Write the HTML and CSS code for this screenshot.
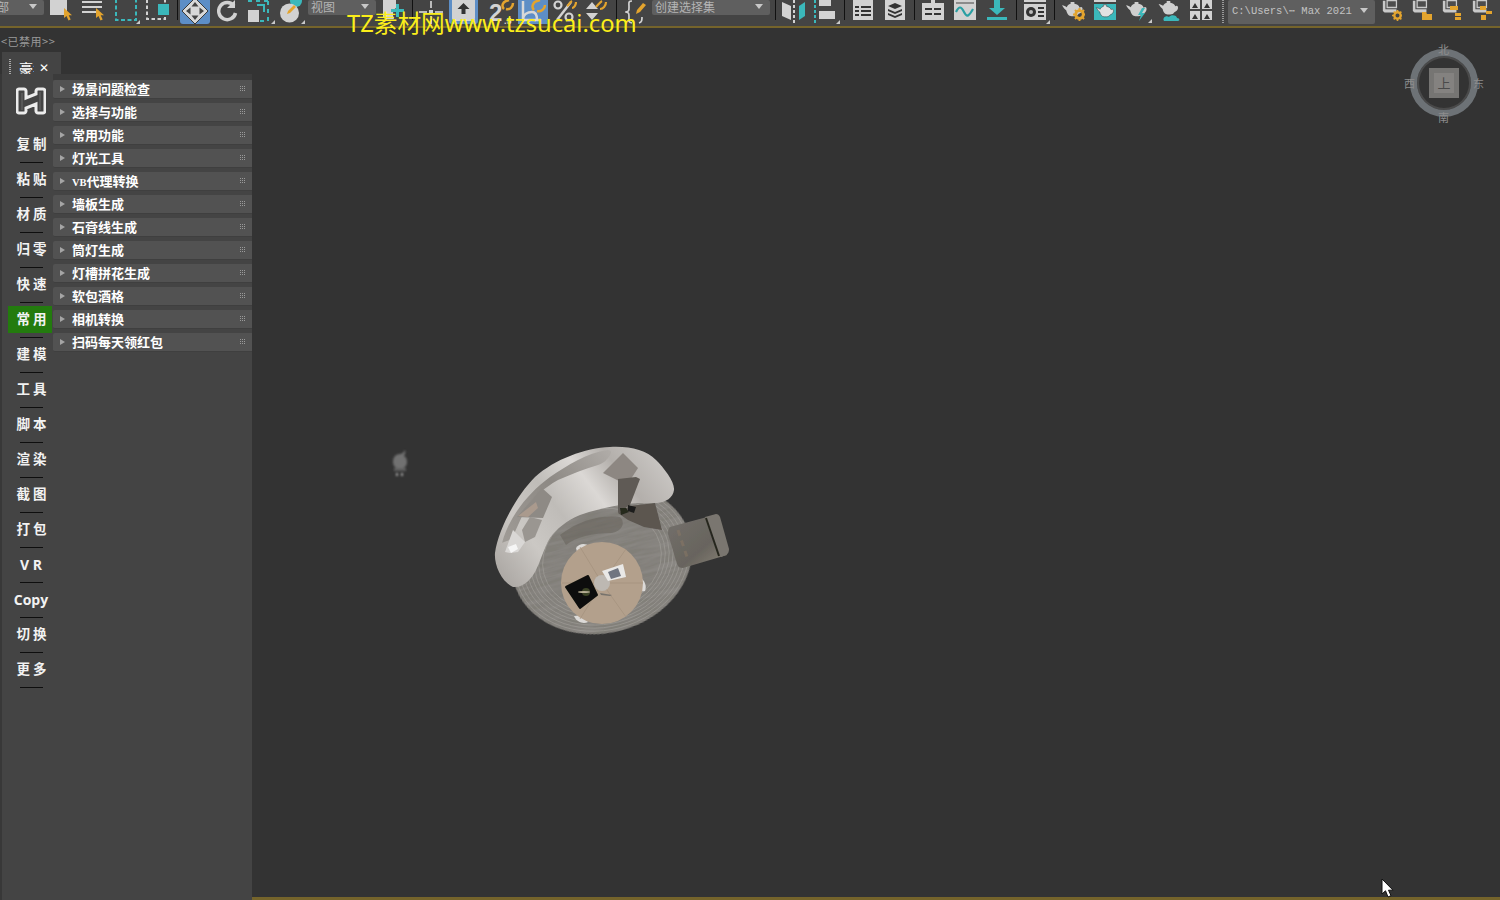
FILE: index.html
```html
<!DOCTYPE html>
<html lang="zh">
<head>
<meta charset="utf-8">
<title>3ds Max</title>
<link rel="stylesheet" href="styles.css">
</head>
<body>
<svg class="defs" width="0" height="0" aria-hidden="true">
  <defs>
    <symbol id="teapot" viewBox="0 0 22 20">
      <path d="M9 1h4v2c3 .5 5 2 5.500 4 2-1.500 3.500 0 3 2.500-.5 2-2 3.500-4 4-1 1.500-2.500 2.500-4.500 2.500h-3C7 16 5 13 4.500 10 3 9 1.500 7 0 4.500c2 .5 3.500 1 5 2 .5-1.500 2-3 4-3.500z"/>
    </symbol>
    <symbol id="gear" viewBox="0 0 12 12">
      <circle cx="6" cy="6" r="3.500" fill="none" stroke="#e3a42e" stroke-width="2.600"/>
      <path d="M6 0v2M6 10v2M0 6h2M10 6h2M1.800 1.800l1.400 1.400M8.800 8.800l1.400 1.400M1.800 10.200l1.400-1.400M8.800 3.200l1.400-1.400" stroke="#e3a42e" stroke-width="1.800"/>
    </symbol>
    <symbol id="doc" viewBox="0 0 20 16">
      <path d="M1 0h3v10h13v4H3l-2-2zM6 0h11v8H6z" fill="#c9c9c9"/>
      <path d="M6 0h11v8H6z" fill="#4c4c4c" stroke="#c9c9c9" stroke-width="1.500"/>
    </symbol>
    <symbol id="cursor" viewBox="0 0 9 13">
      <path d="M0 0v10l2.500-2 2 4.500 2.200-1-2-4.200H8z" fill="#e3a42e"/>
    </symbol>
  </defs>
</svg>

<div class="app">
  <header class="toolbar">
    <div class="dd dd-first"><span class="dd-text">部</span><i class="caret"></i></div>

    <svg class="ic m6" width="24" height="24"><rect x="0" y="-2" width="17" height="17" fill="#d2d2d2"/><use href="#cursor" x="14" y="8" width="9" height="13"/></svg>
    <svg class="ic m8" width="24" height="24"><path d="M0 1h20v2H0zM0 6h20v2H0zM0 11h14v2H0z" fill="#d2d2d2"/><use href="#cursor" x="14" y="8" width="9" height="13"/></svg>
    <svg class="ic m8" width="26" height="24"><rect x="2" y="-1" width="20" height="21" fill="none" stroke="#3bb8bb" stroke-width="2" stroke-dasharray="4 2.500"/><path d="M26 20v4h-4z" fill="#c9c9c9"/></svg>
    <svg class="ic m6" width="26" height="24"><rect x="1" y="-1" width="18" height="20" fill="none" stroke="#d2d2d2" stroke-width="2" stroke-dasharray="3.500 2.500"/><rect x="12" y="4" width="11" height="11" fill="#3bb8bb"/></svg>
    <i class="sep m5"></i>

    <div class="on on-move m2">
      <svg width="30" height="24"><path d="M15 -2l13 13-13 13L2 11z" fill="#d8d8d8" stroke="#3a3a3a"/><path d="M15 2l3.500 4.500h-7zM15 20l3.500-4.500h-7zM6 11l4.500-3.500v7zM24 11l-4.500-3.500v7z" fill="#444"/></svg>
    </div>
    <svg class="ic m7" width="22" height="24"><path d="M17 6a8.500 8.500 0 1 0 1.500 7" fill="none" stroke="#d2d2d2" stroke-width="3.500"/><path d="M18 0v8h-8z" fill="#d2d2d2"/></svg>
    <svg class="ic m8" width="28" height="24"><path d="M1 1h4M9 1h4M17 1h4M21 1v4M21 9v4M21 17v4M13 21h4" fill="none" stroke="#3bb8bb" stroke-width="2"/><rect x="1" y="10" width="11" height="12" fill="#d2d2d2"/><path d="M10 5h7v7" fill="none" stroke="#3bb8bb" stroke-width="2"/><path d="M28 20v4h-4z" fill="#c9c9c9"/></svg>
    <svg class="ic m4" width="26" height="24"><circle cx="17" cy="1" r="6" fill="#3bb8bb"/><circle cx="10.500" cy="13" r="9.500" fill="#d2d2d2"/><path d="M9 11l6-6 2 2-6 6-3 1z" fill="#e3a42e"/><path d="M26 20v4h-4z" fill="#c9c9c9"/></svg>

    <div class="dd dd-view m3"><span class="dd-text">视图</span><i class="caret"></i></div>

    <svg class="ic m6" width="24" height="24"><path d="M1 0h13v8c-2 1-3 3-3 6 0 2 .5 4 1 5H3l-2-2z" fill="#d2d2d2"/><path d="M16 8h3v5h5v3h-5v5h-3v-5h-5v-3h5z" fill="#3bb8bb" transform="translate(-2 -4)"/></svg>
    <i class="sep m6"></i>
    <svg class="ic m6" width="24" height="24"><path d="M11 1h2v10h11v2H13v11h-2V13H0v-2h11z" fill="#bbb"/><rect x="8" y="8" width="8" height="8" fill="#444"/><rect x="10" y="10" width="4" height="4" fill="#d2d2d2"/></svg>
    <div class="on on-lift m6">
      <svg width="23" height="24"><rect x="0" y="-3" width="23" height="24" rx="3" fill="#d2d2d2"/><path d="M11.500 3l6 6h-4v5h-4V9h-4z" fill="#333"/></svg>
    </div>
    <svg class="ic m9" width="28" height="24"><text x="2" y="21" class="ic-num">2</text><text x="17" y="24" class="ic-num-s">.5</text><path d="M17 9c-3-3-1-7 2-8l3-1M19 9c4 1 7-2 7-6" fill="none" stroke="#e3a42e" stroke-width="2.500"/></svg>
    <div class="on on-angle m3">
      <svg width="30" height="24"><path d="M5 1v19h18M5 20c0-6 5-8 9-8 3 0 5 3 5 8" fill="none" stroke="#d8d8d8" stroke-width="2.500"/><path d="M16 10c-3-3-1-8 3-9l3-1M19 11c4 1 8-2 8-6" fill="none" stroke="#e3a42e" stroke-width="2.500"/></svg>
    </div>
    <svg class="ic m5" width="24" height="24"><path d="M18 2L4 20" stroke="#d2d2d2" stroke-width="2.500"/><circle cx="5" cy="5" r="3.500" fill="none" stroke="#d2d2d2" stroke-width="2.200"/><circle cx="16" cy="17" r="3.500" fill="none" stroke="#d2d2d2" stroke-width="2.200"/><path d="M14 6c2-1 3-4 5-5M19 8c2 0 4-3 4-6" fill="none" stroke="#e3a42e" stroke-width="2.200"/></svg>
    <svg class="ic m8" width="24" height="24"><path d="M1 9l6-7 6 7zM1 13h12l-6 7z" fill="#d2d2d2"/><path d="M11 7c2-2 4-5 6-6M15 9c3 0 6-3 6-7" fill="none" stroke="#e3a42e" stroke-width="2.200"/></svg>
    <i class="sep m7"></i>
    <svg class="ic m8" width="22" height="24"><path d="M7 1C3 1 4 3 4 7s0 4-3 5c3 1 3 1 3 5s-1 5 3 6M14 23c3-1 3-3 3-6" fill="none" stroke="#d2d2d2" stroke-width="1.700"/><path d="M12 10l6-7 3 2-6 7-4 2z" fill="#e3a42e"/></svg>

    <div class="dd dd-sets m5"><span class="dd-text">创建选择集</span><i class="caret"></i></div>
    <i class="sep m5"></i>

    <svg class="ic m6" width="24" height="24"><path d="M0 2l9 4v14L0 16z" fill="#d2d2d2"/><path d="M23 2l-6 4v14l6-4z" fill="#3bb8bb"/><path d="M12 0v24" stroke="#d2d2d2" stroke-width="2" stroke-dasharray="3 2"/></svg>
    <svg class="ic m8" width="26" height="24"><path d="M1 0v24" stroke="#3bb8bb" stroke-width="2" stroke-dasharray="3 2"/><rect x="5" y="-2" width="12" height="8" fill="#d2d2d2"/><rect x="5" y="11" width="16" height="8" fill="#d2d2d2"/><path d="M26 20v4h-4z" fill="#c9c9c9"/></svg>
    <i class="sep m4"></i>

    <svg class="ic m8" width="20" height="24"><path d="M0 0h20v20H0z" fill="#d2d2d2"/><path d="M2 6h4v2H2zM8 6h10v2H8zM2 10h4v2H2zM8 10h10v2H8zM2 14h4v2H2zM8 14h10v2H8z" fill="#333"/></svg>
    <svg class="ic m12" width="20" height="24"><path d="M0 0h20v20H0z" fill="#d2d2d2"/><path d="M10 3l7 3-7 3-7-3zM3 9l7 3 7-3v2l-7 3-7-3zM3 13l7 3 7-3v2l-7 3-7-3z" fill="#333"/></svg>
    <i class="sep m9"></i>
    <svg class="ic m7" width="22" height="24"><path d="M0 3h9V0h4v3h9v17H0z" fill="#d2d2d2"/><path d="M3 8h7v2H3zM12 8h7v2h-7zM3 13h7v2H3zM12 13h7v2h-7z" fill="#333"/></svg>
    <svg class="ic m10" width="22" height="24"><path d="M0 0h22v20H0z" fill="#d2d2d2"/><path d="M2 12c3-6 5-6 8 0s5 4 9-3" fill="none" stroke="#2a9fa3" stroke-width="2.200"/><path d="M2 3h18" stroke="#444"/></svg>
    <svg class="ic m10" width="22" height="24"><path d="M8 0h6v8h5l-8 7-8-7h5z" fill="#3bb8bb"/><rect x="1" y="17" width="20" height="3" fill="#3bb8bb"/></svg>
    <i class="sep m8"></i>
    <svg class="ic m7" width="26" height="24"><path d="M0 0h22v20H0z" fill="#d2d2d2"/><path d="M0 3h22" stroke="#444" stroke-width="2"/><circle cx="7" cy="12" r="5" fill="#333"/><circle cx="7" cy="12" r="2" fill="#bbb"/><path d="M14 7h6v2h-6zM14 11h6v2h-6zM14 15h6v2h-6z" fill="#333"/><path d="M26 20v4h-4z" fill="#c9c9c9"/></svg>
    <i class="sep m4"></i>
    <svg class="ic m7" width="23" height="24"><use href="#teapot" x="0" y="1" width="21" height="19" fill="#cfcfcf"/><use href="#gear" x="11" y="8" width="13" height="13"/></svg>
    <svg class="ic m9" width="22" height="24"><rect x="0" y="-1" width="22" height="3" fill="#d2d2d2"/><rect x="0" y="4" width="22" height="16" fill="#3bb8bb"/><use href="#teapot" x="1" y="4" width="20" height="16" fill="#e2e2e2" stroke="#333" stroke-width=".6"/></svg>
    <svg class="ic m10" width="26" height="24"><use href="#teapot" x="0" y="1" width="21" height="19" fill="#cfcfcf"/><path d="M16 8l-4 7h3l-2 6 6-8h-3l3-5z" fill="#3bb8bb"/><path d="M26 19v4h-4z" fill="#c9c9c9"/></svg>
    <svg class="ic m6" width="24" height="24"><use href="#teapot" x="0" y="0" width="21" height="18" fill="#cfcfcf"/><path d="M6 21c-2-3 2-6 5-4 2-3 8-2 8 1 3 0 3 3 1 3z" fill="#3bb8bb"/></svg>
    <svg class="ic m8" width="22" height="24"><path d="M0 0h10v9H0zM12 0h10v9H12zM0 11h10v9H0zM12 11h10v9H12z" fill="#d2d2d2"/><path d="M2 8l3-5 3 5zM14 8l3-5 3 5zM2 19l3-5 3 5zM14 19l3-5 3 5z" fill="#333"/></svg>

    <i class="dots m10"></i>
    <div class="dd dd-path m4"><span class="dd-mono">C:\Users\⋯ Max 2021</span><i class="caret"></i></div>

    <svg class="ic m7" width="20" height="24"><use href="#doc" x="0" y="0" width="17" height="15"/><use href="#gear" x="10" y="10" width="11" height="11"/></svg>
    <svg class="ic m10" width="20" height="24"><use href="#doc" x="0" y="0" width="17" height="15"/><path d="M10 12h4l1 2h5v6H10z" fill="#e3a42e"/></svg>
    <svg class="ic m10" width="20" height="24"><use href="#doc" x="0" y="0" width="17" height="15"/><path d="M8 6h8v4H8zM13 13h6v3h-6zM13 17h6v3h-6z" fill="#e3a42e"/></svg>
    <svg class="ic m10" width="20" height="24"><use href="#doc" x="0" y="0" width="17" height="15"/><path d="M8 6h6v4H8zM14 11h6v3h-6zM9 15h5v5H9z" fill="#e3a42e"/></svg>
  </header>
  <div class="goldline"></div>

  <div class="work">
    <aside class="dock">
      <div class="disabled">&lt;已禁用&gt;&gt;</div>
      <div class="tabstrip">
        <div class="tab"><i class="grip"></i><span class="tab-name">豪华</span><span class="tab-close">✕</span></div>
      </div>
      <div class="panel">
        <nav class="rail">
          <div class="logo">
            <svg width="30" height="30" viewBox="0 0 30 30"><path d="M3 3h5c1 0 2 1 2 2v7l10-4V5c0-1 1-2 2-2h5c1 0 2 1 2 2v20c0 1-1 2-2 2h-5c-1 0-2-1-2-2v-7l-10 4v3c0 1-1 2-2 2H3c-1 0-2-1-2-2V5c0-1 1-2 2-2z" fill="none" stroke="#ececec" stroke-width="3"/><path d="M6 7v17M24 6v18" stroke="#6a6a6a" stroke-width="1"/></svg>
          </div>
          <div class="rail-item"><span>复 制</span></div>
          <div class="rail-item"><span>粘 贴</span></div>
          <div class="rail-item"><span>材 质</span></div>
          <div class="rail-item"><span>归 零</span></div>
          <div class="rail-item"><span>快 速</span></div>
          <div class="rail-item rail-on"><span>常 用</span></div>
          <div class="rail-item"><span>建 模</span></div>
          <div class="rail-item"><span>工 具</span></div>
          <div class="rail-item"><span>脚 本</span></div>
          <div class="rail-item"><span>渲 染</span></div>
          <div class="rail-item"><span>截 图</span></div>
          <div class="rail-item"><span>打 包</span></div>
          <div class="rail-item rail-latin"><span>V R</span></div>
          <div class="rail-item rail-latin"><span>Copy</span></div>
          <div class="rail-item"><span>切 换</span></div>
          <div class="rail-item"><span>更 多</span></div>
        </nav>
        <div class="rollouts">
          <div class="rollout"><i class="tri"></i><span>场景问题检查</span><i class="rdots"></i></div>
          <div class="rollout"><i class="tri"></i><span>选择与功能</span><i class="rdots"></i></div>
          <div class="rollout"><i class="tri"></i><span>常用功能</span><i class="rdots"></i></div>
          <div class="rollout"><i class="tri"></i><span>灯光工具</span><i class="rdots"></i></div>
          <div class="rollout"><i class="tri"></i><span><b class="vb">VB</b>代理转换</span><i class="rdots"></i></div>
          <div class="rollout"><i class="tri"></i><span>墙板生成</span><i class="rdots"></i></div>
          <div class="rollout"><i class="tri"></i><span>石膏线生成</span><i class="rdots"></i></div>
          <div class="rollout"><i class="tri"></i><span>筒灯生成</span><i class="rdots"></i></div>
          <div class="rollout"><i class="tri"></i><span>灯槽拼花生成</span><i class="rdots"></i></div>
          <div class="rollout"><i class="tri"></i><span>软包酒格</span><i class="rdots"></i></div>
          <div class="rollout"><i class="tri"></i><span>相机转换</span><i class="rdots"></i></div>
          <div class="rollout"><i class="tri"></i><span>扫码每天领红包</span><i class="rdots"></i></div>
        </div>
      </div>
    </aside>

    <main class="viewport">
      <svg class="person" width="40" height="45" viewBox="0 0 40 45">
        <defs><filter id="soft1"><feGaussianBlur stdDeviation=".8"/></filter></defs>
        <g filter="url(#soft1)">
          <path d="M25 10c-1 2-3 4-5 4-5 0-7 4-7 8s3 7 7 7 7-3 7-7c0-3-1-5-3-6 1-2 2-4 1-6z" fill="#717171"/>
          <rect x="14" y="28" width="12" height="3" fill="#5e5e5e"/>
          <path d="M16 33h2v3h-2zM21 33h2v3h-2z" fill="#a0a0a0"/>
        </g>
      </svg>

      <svg class="model" width="260" height="210" viewBox="0 0 260 210">
        <defs>
          <filter id="soft"><feGaussianBlur stdDeviation=".5"/></filter>
          <filter id="rugtex" x="0" y="0" width="100%" height="100%">
            <feTurbulence type="fractalNoise" baseFrequency=".03 .28" numOctaves="3" seed="7"/>
            <feColorMatrix values="0 0 0 0 .22  0 0 0 0 .21  0 0 0 0 .19  1.800 1.800 0 0 -1.250"/>
            <feComposite in2="SourceAlpha" operator="in"/>
            <feMerge><feMergeNode in="SourceGraphic"/><feMergeNode/></feMerge>
          </filter>
          <linearGradient id="sofa" gradientUnits="userSpaceOnUse" x1="30" y1="150" x2="190" y2="30">
            <stop offset="0" stop-color="#aeaaa6"/>
            <stop offset=".22" stop-color="#cbc8c4"/>
            <stop offset=".42" stop-color="#bfbcb8"/>
            <stop offset=".62" stop-color="#dbd8d5"/>
            <stop offset=".78" stop-color="#b3afab"/>
            <stop offset="1" stop-color="#cbc8c5"/>
          </linearGradient>
          <linearGradient id="back" gradientUnits="userSpaceOnUse" x1="20" y1="110" x2="130" y2="15">
            <stop offset="0" stop-color="#a09c97"/>
            <stop offset=".55" stop-color="#8d8984"/>
            <stop offset="1" stop-color="#b0aca8"/>
          </linearGradient>
          <linearGradient id="chair" x1="0" y1="0" x2="1" y2="1">
            <stop offset="0" stop-color="#73706b"/>
            <stop offset=".6" stop-color="#68645e"/>
            <stop offset="1" stop-color="#8a8578"/>
          </linearGradient>
        </defs>
        <g filter="url(#soft)">
          <ellipse cx="122" cy="124" rx="91" ry="74" transform="rotate(-15 122 124)" fill="#8a8783" filter="url(#rugtex)"/>
          <g fill="none" stroke="#a5a29d" stroke-width=".7" opacity=".75" transform="rotate(-15 122 124)">
            <ellipse cx="122" cy="124" rx="88" ry="71"/><ellipse cx="122" cy="124" rx="84" ry="68"/><ellipse cx="122" cy="124" rx="80" ry="65"/><ellipse cx="122" cy="124" rx="76" ry="62"/><ellipse cx="122" cy="124" rx="72" ry="59"/><ellipse cx="122" cy="124" rx="68" ry="56"/><ellipse cx="122" cy="124" rx="64" ry="53"/><ellipse cx="122" cy="124" rx="60" ry="50"/>
          </g>
          <path d="M80 100C100 85 120 80 140 82c6 6 2 14-8 16-20 0-36 4-46 12z" fill="#5f5b55" opacity=".45"/>

          <path d="M33 152C20 146 14 128 15 118 18 96 35 62 55 42 75 24 105 13 130 12c20-1 36 3 46 13 8 8 19 22 18 30-1 8-8 12-17 13-8 1-14 0-21 0-18 2-36 5-56 12-14 6-24 14-30 23-6 10-9 22-14 32-4 8-12 18-23 17z" fill="url(#sofa)"/>
          <path d="M22 108C29 82 48 58 70 42c18-12 36-24 58-27 3 0 4 2 2 5-3 5-6 8-12 10-14 4-26 9-40 15-14 8-26 18-33 30-5 10-8 18-13 28-3 3-9 4-10 5z" fill="url(#back)"/>

          <path d="M37 82L62 53l10 9-9 21z" fill="#8e8a85"/>
          <path d="M38 81l18-14 2 6-10 9z" fill="#b39f90" opacity=".75"/>
          <path d="M42 95l8-13 12 3-7 17-10 5z" fill="#9a9691"/>
          <path d="M25 117l8-22 12 12-7 10-8 1z" fill="#d9d7d5"/>
          <path d="M28 112l8-3 2 5-7 4z" fill="#f5f5f5"/>

          <path d="M123 38l20-20 15 15-11 17z" fill="#8d8782"/>
          <path d="M138 44l18-2 4 2-10 26-12 8z" fill="#5f5a54"/>
          <path d="M138 78l12-7 25-3 7 27-18-3-16-7z" fill="#5b5650"/>
          <path d="M140 73l6 0 3 4-8 3z" fill="#26291f"/>
          <path d="M148 70l8 2-2 6-6-2z" fill="#1e1f1a"/>

          <path d="M190 92l37-10 20 38-44 13c-3 0-5-1-6-4l-9-30c0-3 0-5 2-7z" fill="url(#chair)"/>
          <path d="M225 82l11-3c2 0 3 1 4 3l9 32c0 3-1 5-3 6l-5 2z" fill="#7a766f"/>
          <path d="M226 83l13 38" stroke="#26271f" stroke-width="2" fill="none"/>
          <path d="M198 95l10 30" stroke="#8f7b66" stroke-width="3" stroke-dasharray="6 5" fill="none" opacity=".45"/>

          <path d="M96 113c3-5 10-5 13-2l-4 6h-8z" fill="#dcdad8"/>
          <path d="M94 181c3 7 10 8 14 6l-6-7z" fill="#dcdad8"/>
          <path d="M160 142c5 4 7 9 5 14l-7 1z" fill="#dcdad8"/>
          <circle cx="122" cy="148" r="41" fill="#b3a08c"/>
          <path d="M122 148L100 112M122 148L146 114M122 148L163 148M122 148L146 182M122 148L100 184M122 148L82 148" stroke="#a4917d" stroke-width=".7"/>
          <path d="M86 152l22-11 9 19-17 13z" fill="#0f100c" stroke="#0f100c" stroke-width="2" stroke-linejoin="round"/>
          <circle cx="106" cy="157" r="4" fill="#3a4225"/>
          <ellipse cx="104" cy="157" rx="6" ry="1" fill="#b5ad94"/>
          <circle cx="122" cy="148" r="8" fill="#bdb8b2"/>
          <path d="M122 136l21-7 3 13-18 4z" fill="#e9e8e6"/>
          <path d="M128 137l10-4 3 8-10 3z" fill="#6f7480"/>
          <path d="M120 158l12 2-2 1-9-1z" fill="#77736c"/>
        </g>
      </svg>

      <div class="compass">
        <span class="cn cn-n">北</span><span class="cn cn-s">南</span><span class="cn cn-e">东</span><span class="cn cn-w">西</span>
        <div class="cube"><div class="cube-top">上</div></div>
      </div>

      <svg class="pointer" width="14" height="21" viewBox="0 0 14 21"><path d="M1 1v15l3.500-3.200L7 19l3-1.400-2.500-5.400H12z" fill="#fff" stroke="#111"/></svg>
    </main>
  </div>

  <div class="watermark">TZ素材网www.tzsucai.com</div>
</div>
</body>
</html>
```
FILE: styles.css
```css
* { box-sizing: border-box; }
html, body { margin: 0; height: 100%; background: #333; overflow: hidden; }
body { font-family: "Noto Sans CJK SC", "Liberation Sans", sans-serif; color: #fff; }
i { display: block; font-style: normal; }
.defs { position: absolute; }

.app { position: relative; width: 1500px; height: 900px; display: flex; flex-direction: column; overflow: hidden; }

/* top toolbar */
.toolbar { height: 26px; background: #444; display: flex; align-items: flex-start; flex: none; overflow: hidden; }
.goldline { height: 2px; flex: none; background: #75642b; }
.ic { display: block; flex: none; overflow: hidden; }
.sep { width: 1px; height: 20px; background: #111; flex: none; }
.dots { width: 2px; height: 24px; flex: none; background-image: linear-gradient(#999 50%, transparent 50%); background-size: 2px 2px; }
.ic-num { font: 700 24px "Liberation Sans", sans-serif; fill: #d2d2d2; }
.ic-num-s { font: 700 9px "Liberation Sans", sans-serif; fill: #d2d2d2; }

.m2 { margin-left: 2px; } .m3 { margin-left: 3px; } .m4 { margin-left: 4px; } .m5 { margin-left: 5px; }
.m6 { margin-left: 6px; } .m7 { margin-left: 7px; } .m8 { margin-left: 8px; } .m9 { margin-left: 9px; }
.m10 { margin-left: 10px; } .m12 { margin-left: 12px; }

.dd { position: relative; height: 15px; background: #5f5f5f; flex: none; display: flex; align-items: center; color: #b4b4b4; overflow: hidden; }
.dd-text { font-size: 12px; line-height: 13px; padding-left: 3px; margin-top: -3px; }
.dd-first { width: 44px; border-radius: 0 2px 2px 0; }
.dd-first .dd-text { margin-left: -6px; }
.dd-view { width: 68px; border-radius: 2px; }
.dd-sets { width: 118px; border-radius: 2px; }
.dd-path { width: 147px; height: 24px; border-radius: 2px; }
.dd-mono { font: 10.500px "Liberation Mono", monospace; padding-left: 4px; color: #c2c2c2; margin-top: -4px; white-space: pre; }
.caret { position: absolute; right: 7px; top: 4px; width: 0; height: 0; border: 4px solid transparent; border-top: 5px solid #c8c8c8; border-bottom: 0; }
.dd-path .caret { top: 8px; }

.on { flex: none; background: #5d8ec6; border-radius: 0 0 3px 3px; height: 24px; display: flex; justify-content: center; }
.on-move { width: 30px; }
.on-lift { width: 29px; }
.on-angle { width: 30px; border-radius: 0; }

/* working area */
.work { flex: 1; min-height: 0; display: flex; }
.dock { width: 252px; flex: none; display: flex; flex-direction: column; background: #333; }
.disabled { height: 24px; padding: 6px 0 0 1px; font-size: 11px; letter-spacing: .5px; line-height: 15px; color: #999; flex: none; }
.tabstrip { height: 22px; padding-left: 2px; flex: none; display: flex; }
.tab { width: 59px; height: 22px; background: #444; display: flex; align-items: center; padding: 9px 0 0 7px; }
.grip { width: 2px; height: 17px; background-image: linear-gradient(#aaa 50%, transparent 50%); background-size: 2px 2px; }
.tab-name { width: 15px; margin-left: 8px; overflow: hidden; white-space: nowrap; font-size: 14px; line-height: 16px; }
.tab-close { margin-left: 5px; font-size: 12px; line-height: 14px; font-weight: 700; font-family: "DejaVu Sans", sans-serif; }

.panel { flex: 1; min-height: 0; display: flex; padding-left: 2px; background: #383838; }
.rail { width: 51px; flex: none; background: #444; display: flex; flex-direction: column; padding-top: 6px; }
.logo { height: 47px; padding: 6px 0 0 14px; flex: none; }
.rail-item { height: 35px; flex: none; display: flex; align-items: center; justify-content: center; position: relative; padding: 0 0 3px 8px; }
.rail-item span { font-size: 13.500px; font-weight: 700; line-height: 32px; color: #f2f2f2; white-space: pre; }
.rail-item::after { content: ""; position: absolute; left: 18px; bottom: -1px; width: 23px; height: 1px; background: #0e0e0e; }
.rail-on::before { content: ""; position: absolute; left: 6px; right: 1px; top: 4px; height: 27px; background: #237b0e; }
.rail-on span { position: relative; }
.rail-latin { padding: 2px 0 1px 7px; }
.rail-latin span { font-family: "Open Sans", sans-serif; font-size: 14px; }

.rollouts { flex: 1; min-width: 0; display: flex; flex-direction: column; gap: 4px; background: #444; padding: 6px 0 0 0; box-shadow: inset 0 6px 0 #3b3b3b; }
.rollout { height: 19px; flex: none; display: flex; align-items: center; background: #525252; border-radius: 2px 0 0 2px; border-bottom: 1px solid #3f3f3f; position: relative; }
.rollout span { margin: -2px 0 0 19px; font-size: 13px; font-weight: 700; line-height: 17px; color: #fff; }
.vb { font: 700 10.500px "Liberation Serif", serif; }
.tri { position: absolute; left: 7px; top: 6px; width: 0; height: 0; border: 3px solid transparent; border-left: 5px solid #a5a5a5; border-right: 0; }
.rdots { position: absolute; right: 7px; top: 6px; width: 5px; height: 5px; background-image: radial-gradient(circle at .5px .5px, #9a9a9a .7px, transparent .7px); background-size: 2px 2px; }

.viewport { position: relative; flex: 1; min-width: 0; background: #333; border-bottom: 3px solid #75642b; }
.person { position: absolute; left: 128px; top: 412px; }
.model { position: absolute; left: 228px; top: 407px; }
.pointer { position: absolute; left: 1129px; top: 850px; }

.compass { position: absolute; left: 1158px; top: 21px; width: 68px; height: 68px; border-radius: 50%; border: 7px solid #6d7276; box-shadow: inset 0 0 0 2px #4a4a4a; display: flex; align-items: center; justify-content: center; }
.cube { width: 30px; height: 30px; background: #767573; display: flex; align-items: center; justify-content: center; }
.cube-top { width: 20px; height: 20px; background: #848280; font-size: 13px; line-height: 20px; text-align: center; color: #4a4a4a; }
.cn { position: absolute; font-size: 11px; line-height: 12px; color: #8d8d8d; }
.cn-n { left: 50%; top: -13px; margin-left: -6px; }
.cn-s { left: 50%; bottom: -13px; margin-left: -6px; }
.cn-e { right: -13px; top: 50%; margin-top: -6px; }
.cn-w { left: -13px; top: 50%; margin-top: -6px; }

.watermark { position: absolute; left: 347px; top: 7px; font-family: "Noto Sans", "Noto Sans CJK SC", sans-serif; font-size: 23.700px; line-height: 32px; color: #fbee1a; white-space: nowrap; }
```
